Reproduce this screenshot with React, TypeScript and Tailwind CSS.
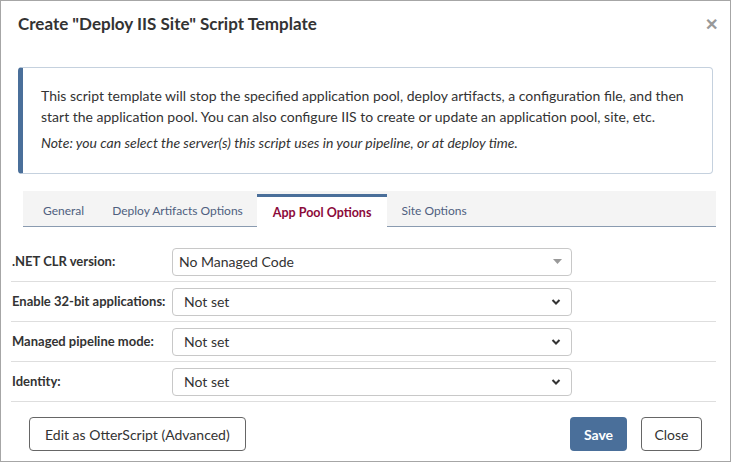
import React from "react";

const font = { fontFamily: "Lato, 'Liberation Sans', sans-serif" };

const Chevron = () => (
	<svg width="10" height="10" viewBox="0 0 10 10" className="text-[#333]">
		<path d="M1.5 3 L5 6.5 L8.5 3" fill="none" stroke="currentColor" strokeWidth="2" />
	</svg>
);

const Caret = () => (
	<svg width="9" height="6" viewBox="0 0 9 6">
		<path d="M0 0 L9 0 L4.5 5 Z" fill="#999" />
	</svg>
);

const FormRow = ({ label, value, caret }: { label: string; value: string; caret?: boolean }) => (
	<div className="flex items-center h-10 border-b border-[#dedede] mr-[14px]">
		<label className="w-[161px] pl-[1px] text-[13px] font-bold text-[#333]">{label}</label>
		<div className="flex items-center justify-between w-[400px] h-7 pl-[6px] pr-2 rounded border border-[#c8c8c8] bg-white text-[14px] text-[#333]">
			<span className={caret ? "" : "pl-[5px]"}>{value}</span>
			<span className={caret ? "pr-[1px]" : "pr-[2px]"}>{caret ? <Caret /> : <Chevron />}</span>
		</div>
	</div>
);

export default function App() {
	const tabs = ["General", "Deploy Artifacts Options", "App Pool Options", "Site Options"];
	return (
		<div style={font} className="w-[731px] h-[462px] bg-white border border-[#a6a6a6] flex flex-col">
			<div className="flex items-center justify-between h-[46px] pl-[17px] pr-[12px]">
				<h1 className="text-[17px] font-bold text-[#333]">Create "Deploy IIS Site" Script Template</h1>
				<span className="text-[#999] text-[16px] font-bold">✕</span>
			</div>

			<div className="mx-[17px] mt-[20px] rounded border border-[#c5d1de] border-l-[5px] border-l-[#4a6f9a] pl-[18px] pr-4 pt-[17px] pb-[20px] text-[14px] text-[#333] leading-[21px]">
				<p>
					This script template will stop the specified application pool, deploy artifacts, a configuration file, and then
					start the application pool. You can also configure IIS to create or update an application pool, site, etc.
				</p>
				<p className="italic mt-[5px]">Note: you can select the server(s) this script uses in your pipeline, or at deploy time.</p>
			</div>

			<div className="mt-[17px] ml-[22px] mr-[14px] h-[36px] bg-[#f4f4f4] border-b border-[#8a9bb0] flex items-end pl-[6px]">
				{tabs.map((t) => {
					const active = t === "App Pool Options";
					return active ? (
						<div
							key={t}
							className="h-[33px] -mb-px px-[16px] pt-[3px] bg-white border-t-[3px] border-t-[#4a6f9a] flex items-center text-[12.5px] font-bold text-[#8b0a3a]">
							{t}
						</div>
					) : (
						<div key={t} className="h-[32px] px-[14px] pt-[2px] flex items-center text-[12px] text-[#4f5f7f]">
							{t}
						</div>
					);
				})}
			</div>

			<div className="mt-[15px] pl-[10px]">
				<FormRow label=".NET CLR version:" value="No Managed Code" caret />
				<FormRow label="Enable 32-bit applications:" value="Not set" />
				<FormRow label="Managed pipeline mode:" value="Not set" />
				<FormRow label="Identity:" value="Not set" />
			</div>

			<div className="flex items-center justify-between pl-[28px] pr-[28px] mt-[15px]">
				<button className="h-[34px] px-[15px] rounded border border-[#666] bg-white text-[14px] text-[#333]">
					Edit as OtterScript (Advanced)
				</button>
				<div className="flex gap-[14px]">
					<button className="h-[34px] w-[57px] rounded bg-[#4a6f9a] text-white text-[14px] font-bold">Save</button>
					<button className="h-[34px] w-[61px] rounded border border-[#666] bg-white text-[14px] text-[#333]">Close</button>
				</div>
			</div>
		</div>
	);
}
